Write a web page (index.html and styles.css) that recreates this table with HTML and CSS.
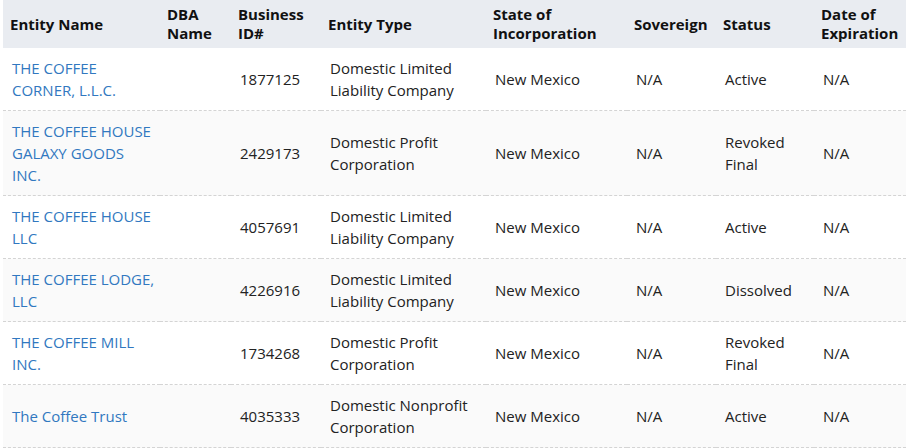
FILE: index.html
```html
<!DOCTYPE html>
<html>
<head>
<meta charset="utf-8">
<link rel="stylesheet" href="styles.css">
</head>
<body>
<table class="results">
  <colgroup>
    <col class="c1"><col class="c2"><col class="c3"><col class="c4"><col class="c5"><col class="c6"><col class="c7"><col class="c8">
  </colgroup>
  <thead>
    <tr>
      <th>Entity Name</th>
      <th>DBA Name</th>
      <th>Business ID#</th>
      <th>Entity Type</th>
      <th>State of Incorporation</th>
      <th>Sovereign</th>
      <th>Status</th>
      <th>Date of Expiration</th>
    </tr>
  </thead>
  <tbody>
    <tr>
      <td class="name"><a class="ent" href="#">THE COFFEE CORNER, L.L.C.</a></td>
      <td></td>
      <td>1877125</td>
      <td>Domestic Limited Liability Company</td>
      <td>New Mexico</td>
      <td>N/A</td>
      <td>Active</td>
      <td>N/A</td>
    </tr>
    <tr>
      <td class="name"><a class="ent" href="#">THE COFFEE HOUSE GALAXY GOODS INC.</a></td>
      <td></td>
      <td>2429173</td>
      <td>Domestic Profit Corporation</td>
      <td>New Mexico</td>
      <td>N/A</td>
      <td>Revoked Final</td>
      <td>N/A</td>
    </tr>
    <tr>
      <td class="name"><a class="ent" href="#">THE COFFEE HOUSE LLC</a></td>
      <td></td>
      <td>4057691</td>
      <td>Domestic Limited Liability Company</td>
      <td>New Mexico</td>
      <td>N/A</td>
      <td>Active</td>
      <td>N/A</td>
    </tr>
    <tr>
      <td class="name"><a class="ent" href="#">THE COFFEE LODGE, LLC</a></td>
      <td></td>
      <td>4226916</td>
      <td>Domestic Limited Liability Company</td>
      <td>New Mexico</td>
      <td>N/A</td>
      <td>Dissolved</td>
      <td>N/A</td>
    </tr>
    <tr>
      <td class="name"><a class="ent" href="#">THE COFFEE MILL INC.</a></td>
      <td></td>
      <td>1734268</td>
      <td>Domestic Profit Corporation</td>
      <td>New Mexico</td>
      <td>N/A</td>
      <td>Revoked Final</td>
      <td>N/A</td>
    </tr>
    <tr>
      <td class="name"><a class="ent" href="#">The Coffee Trust</a></td>
      <td></td>
      <td>4035333</td>
      <td>Domestic Nonprofit Corporation</td>
      <td>New Mexico</td>
      <td>N/A</td>
      <td>Active</td>
      <td>N/A</td>
    </tr>
  </tbody>
</table>
</body>
</html>
```
FILE: styles.css
```css
html, body {
  margin: 0;
  padding: 0;
  background: #fff;
}
body {
  padding: 0 2px 0 3px;
  font-family: "Open Sans", "Noto Sans", sans-serif;
  font-size: 15px;
  color: #222;
}
.results {
  width: 903px;
  border-collapse: collapse;
  table-layout: fixed;
}
.c1 { width: 157px; }
.c2 { width: 71px; }
.c3 { width: 90px; }
.c4 { width: 165px; }
.c5 { width: 141px; }
.c6 { width: 89px; }
.c7 { width: 98px; }
.c8 { width: 92px; }
.results thead tr {
  background: #e9ecf1;
}
.results th {
  text-align: left;
  font-weight: 700;
  font-size: 15px;
  line-height: 19px;
  padding: 5px 2px 5px 7px;
  height: 38px;
  vertical-align: middle;
  color: #111;
}
.results td {
  padding: 9px 2px 9px 9px;
  line-height: 22px;
  vertical-align: middle;
  border-bottom: 1px dashed #d4d4d4;
}
.results td.name {
  padding-right: 5px;
}
.results tbody tr:nth-child(even) {
  background: #fafafa;
}
.ent {
  color: #3178c0;
  text-decoration: none;
}
```
